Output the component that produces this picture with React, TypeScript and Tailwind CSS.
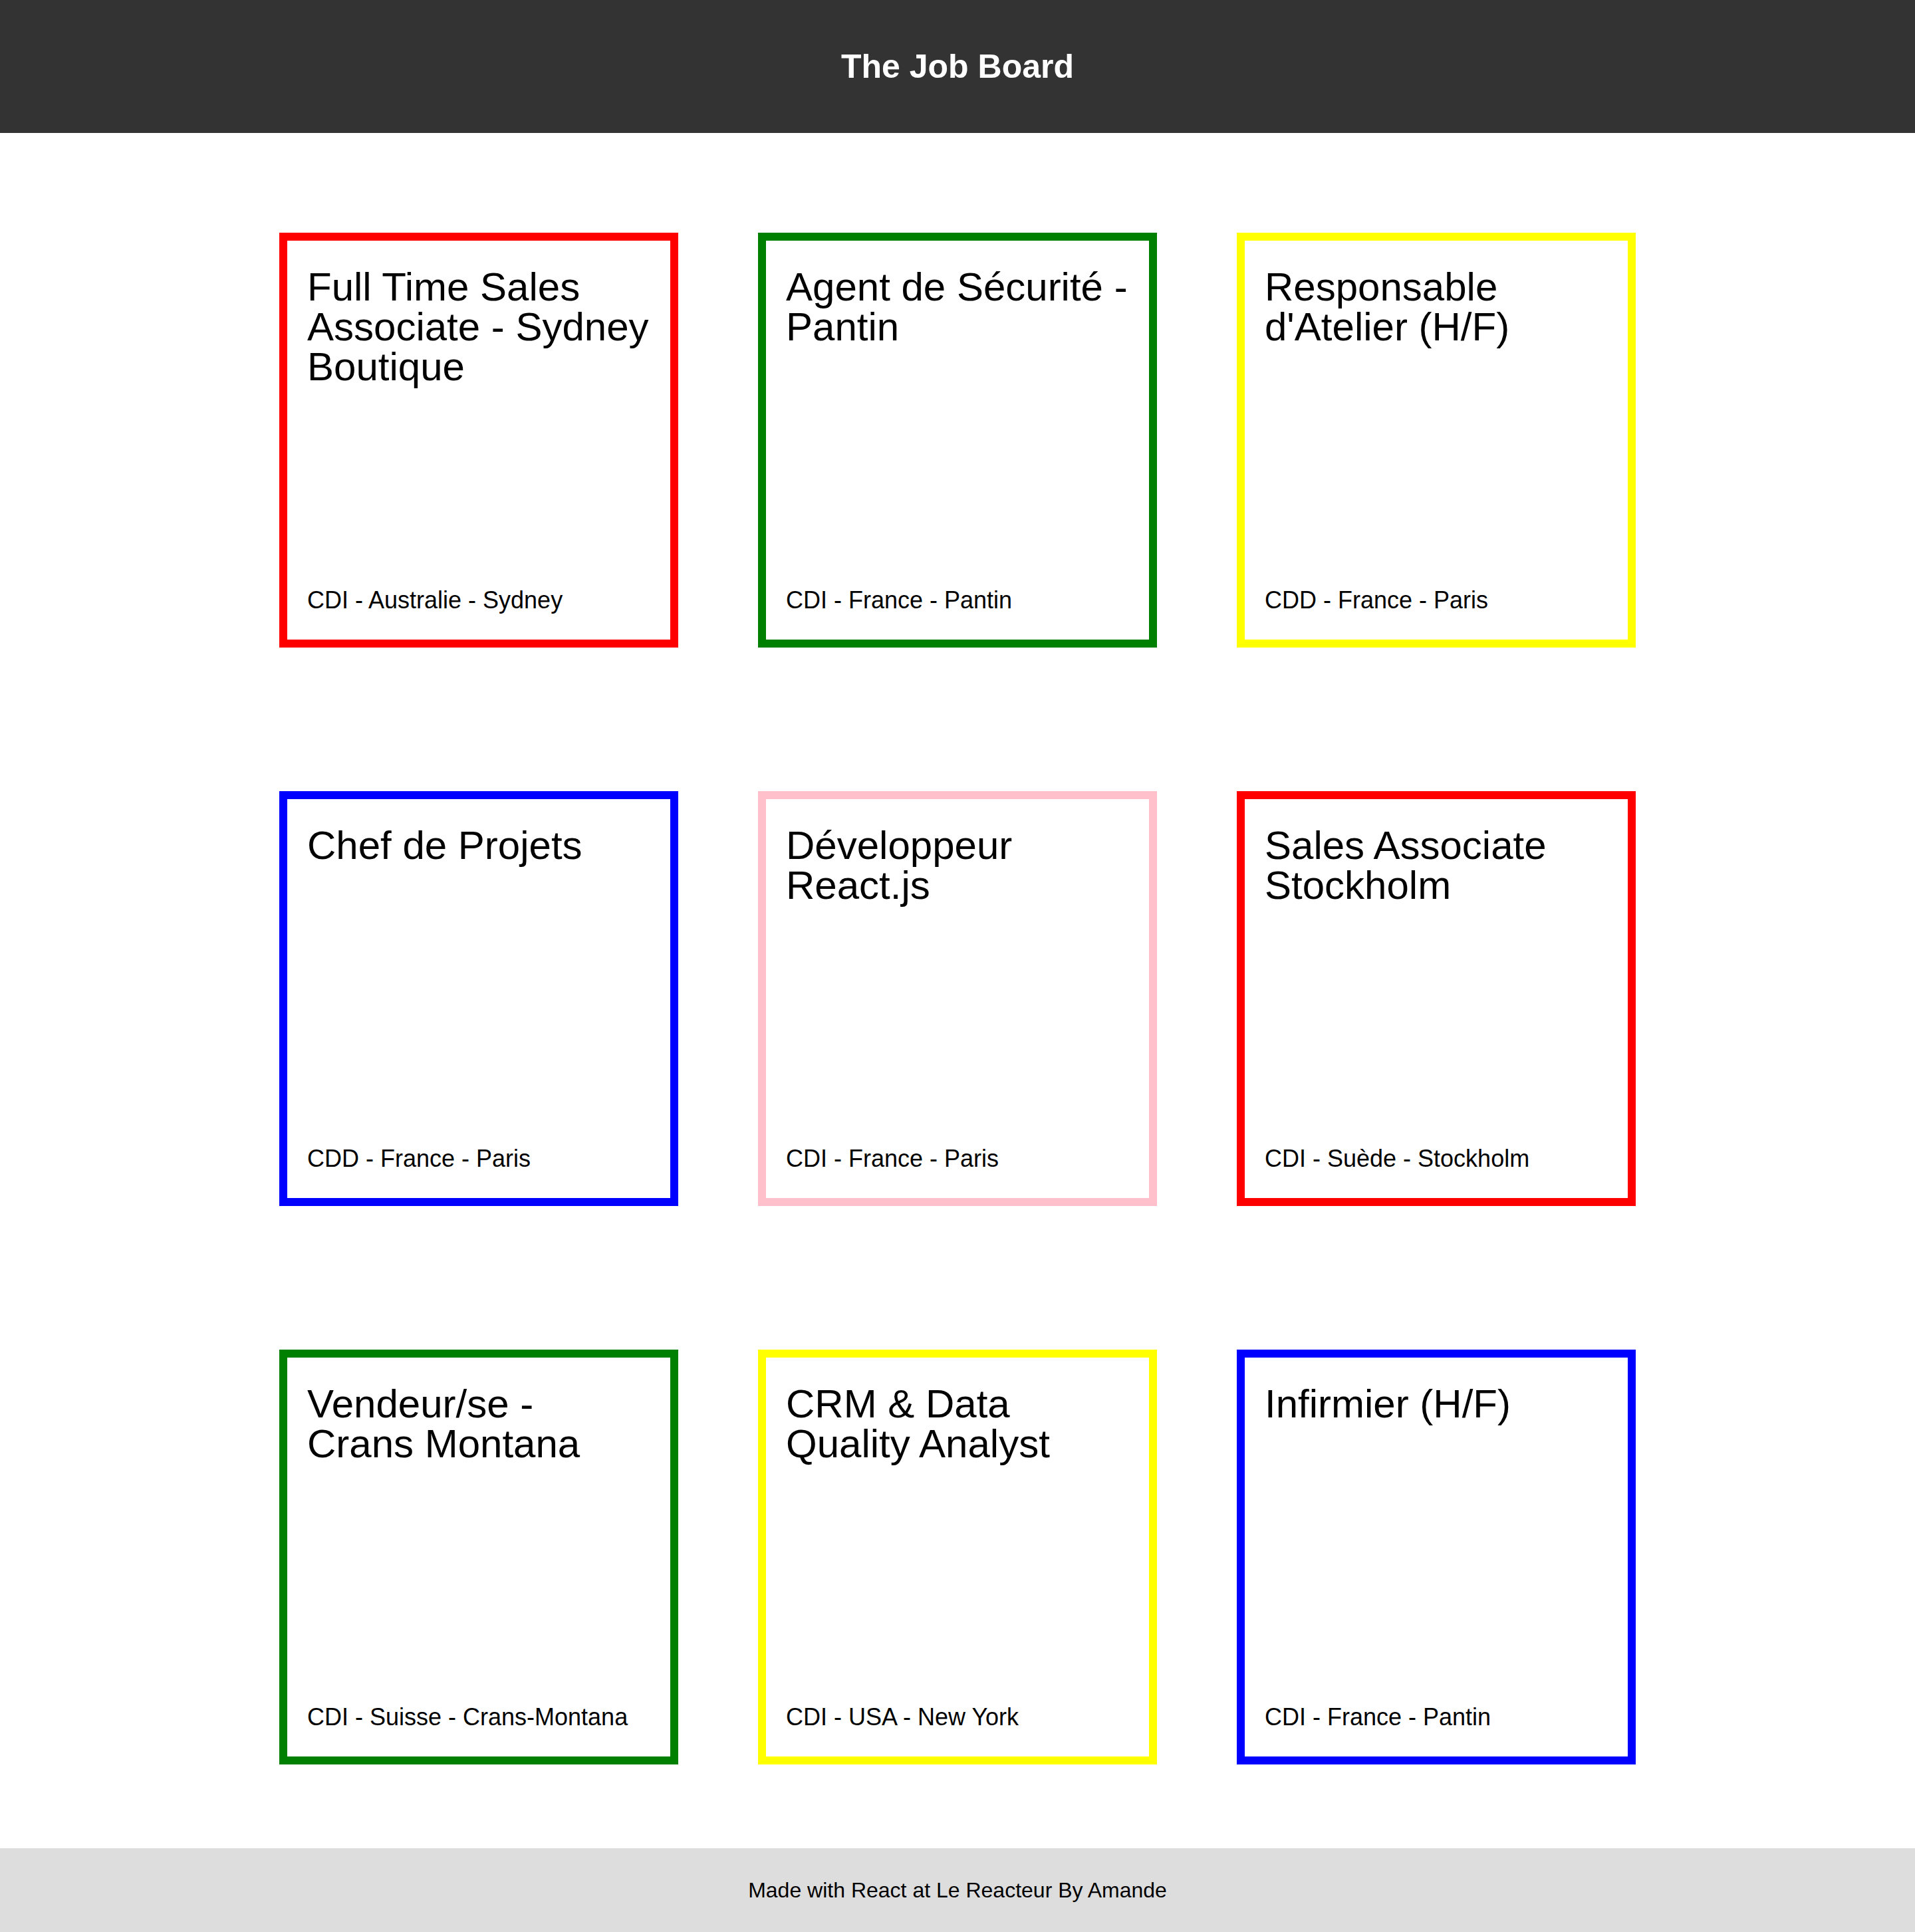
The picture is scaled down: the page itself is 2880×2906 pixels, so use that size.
const jobs = [
  { title: "Full Time Sales Associate - Sydney Boutique", info: "CDI - Australie - Sydney", border: "border-[#ff0000]" },
  { title: "Agent de Sécurité - Pantin", info: "CDI - France - Pantin", border: "border-[#008000]" },
  { title: "Responsable d'Atelier (H/F)", info: "CDD - France - Paris", border: "border-[#ffff00]" },
  { title: "Chef de Projets", info: "CDD - France - Paris", border: "border-[#0000ff]" },
  { title: "Développeur React.js", info: "CDI - France - Paris", border: "border-[#ffc0cb]" },
  { title: "Sales Associate Stockholm", info: "CDI - Suède - Stockholm", border: "border-[#ff0000]" },
  { title: "Vendeur/se - Crans Montana", info: "CDI - Suisse - Crans-Montana", border: "border-[#008000]" },
  { title: "CRM & Data Quality Analyst", info: "CDI - USA - New York", border: "border-[#ffff00]" },
  { title: "Infirmier (H/F)", info: "CDI - France - Pantin", border: "border-[#0000ff]" },
];

const JobCard = ({ title, info, border }: { title: string; info: string; border: string }) => {
  return (
    <div className={`flex h-[624px] w-[600px] flex-col justify-between border-[12px] bg-white px-[30px] pt-[40px] pb-[38px] ${border}`}>
      <h2 className="text-[60px] leading-[60px] font-normal text-black">{title}</h2>
      <p className="text-[36px] leading-[42px] text-black">{info}</p>
    </div>
  );
};

export default function App() {
  return (
    <div className="flex min-h-screen flex-col bg-white font-['Liberation_Sans',Arial,sans-serif]">
      <header className="flex h-[200px] items-center justify-center bg-[#333333]">
        <h1 className="text-[50px] leading-[58px] font-bold text-white">The Job Board</h1>
      </header>

      <main className="flex justify-center pt-[150px] pb-[126px]">
        <div className="grid grid-cols-[600px_600px_600px] gap-x-[120px] gap-y-[216px]">
          {jobs.map((job, i) => (
            <JobCard key={i} title={job.title} info={job.info} border={job.border} />
          ))}
        </div>
      </main>

      <footer className="flex h-[126px] items-center justify-center bg-[#dddddd]">
        <p className="text-[32px] leading-[37px] text-black">Made with React at Le Reacteur By Amande</p>
      </footer>
    </div>
  );
}
